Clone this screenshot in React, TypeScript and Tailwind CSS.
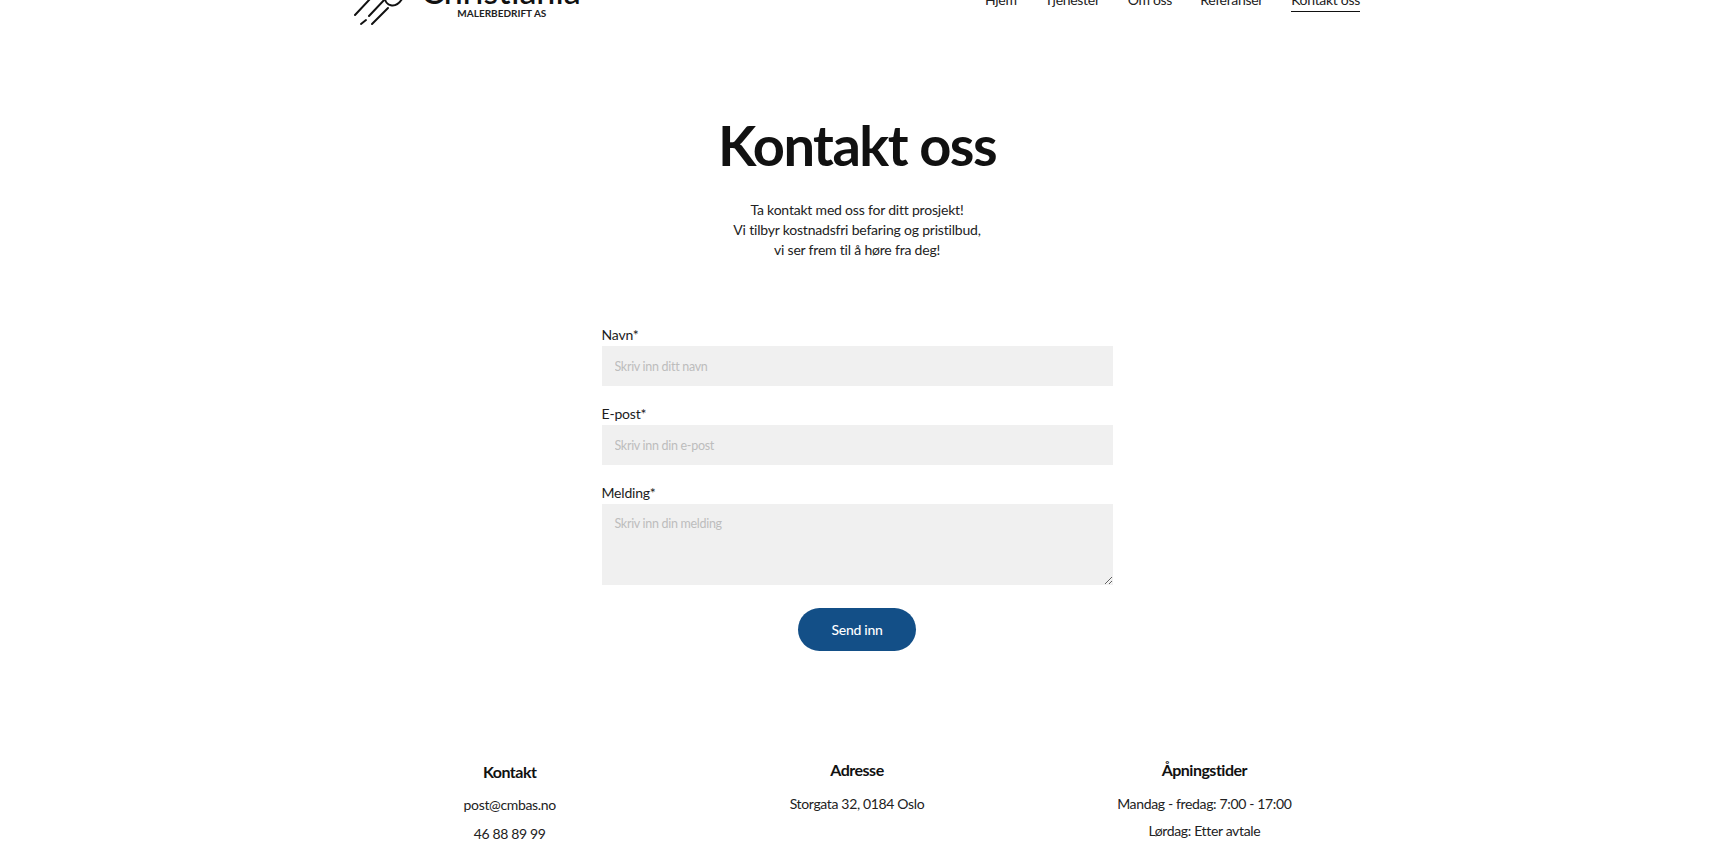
import React from 'react';

const navItems = ['Hjem', 'Tjenester', 'Om oss', 'Referanser', 'Kontakt oss'];

const Field: React.FC<{ label: string; placeholder: string; multiline?: boolean }> = ({ label, placeholder, multiline }) => (
  <div className="flex flex-col">
    <label className="mb-[1px] text-[14px] leading-[20px] tracking-[-0.2px] text-[#1c1c1c]">{label}</label>
    {multiline ? (
      <textarea
        placeholder={placeholder}
        className="h-[81px] bg-[#f0f0f0] px-[13px] py-[11px] text-[12.5px] leading-[18px] tracking-[-0.3px] outline-none placeholder:text-[#bdbdbd]"
      />
    ) : (
      <input
        placeholder={placeholder}
        className="h-[40px] bg-[#f0f0f0] px-[13px] text-[12.5px] tracking-[-0.3px] outline-none placeholder:text-[#bdbdbd]"
      />
    )}
  </div>
);

const FooterColumn: React.FC<{ title: string; lines: string[]; className?: string; listClass: string }> = ({ title, lines, className, listClass }) => (
  <div className={`flex flex-col items-center ${className ?? ''}`}>
    <h3 className="text-[16px] leading-[24px] font-bold tracking-[-0.5px] text-[#111]">{title}</h3>
    <div className={`flex flex-col text-[14px] leading-[22px] tracking-[-0.35px] text-[#222] ${listClass}`}>
      {lines.map((line) => (
        <p key={line} className="text-center">{line}</p>
      ))}
    </div>
  </div>
);

export default function App() {
  return (
    <div className="h-[851px] overflow-hidden bg-white pl-[5px] font-['Lato','Liberation_Sans',sans-serif]">
      <header className="mx-auto -mt-[30px] flex h-[56px] w-[1006px] items-start justify-between">
        <div className="flex items-start">
          <svg className="-ml-[4px]" width="56" height="60" viewBox="0 -30 56 60" fill="none" stroke="#111" strokeWidth="2" strokeLinecap="round">
            <path d="M5 15 L20 -1" />
            <path d="M19 16 L36 -2" />
            <path d="M11 24 L16 20" />
            <path d="M22 24 L38 8" />
            <path d="M35 -2 C35 5 45 10 52 -1" />
          </svg>
          <div className="ml-[15px] flex flex-col items-center">
            <span className="text-[34px] leading-[42px] font-medium text-[#111]">Christiania</span>
            <span className="-mt-[5px] ml-[2px] text-[10px] leading-[12px] font-bold text-[#222]">MALERBEDRIFT AS</span>
          </div>
        </div>
        <nav className="mt-[20px] flex gap-[28px] text-[14px] leading-[20px] tracking-[-0.3px] text-[#222]">
          {navItems.map((item) => (
            <a key={item} className={item === 'Kontakt oss' ? 'h-[22px] border-b-[1.5px] border-[#111]' : ''}>
              {item}
            </a>
          ))}
        </nav>
      </header>

      <main className="flex flex-col items-center">
        <h1 className="mt-[81px] text-[56px] leading-[76px] font-bold tracking-[-1.5px] text-[#111]">Kontakt oss</h1>
        <div className="mt-[17px] text-center text-[14px] leading-[20px] tracking-[-0.2px] text-[#222]">
          <p>Ta kontakt med oss for ditt prosjekt!</p>
          <p>Vi tilbyr kostnadsfri befaring og pristilbud,</p>
          <p>vi ser frem til å høre fra deg!</p>
        </div>
        <form className="mt-[65px] flex w-[511px] flex-col gap-[18px]">
          <Field label="Navn*" placeholder="Skriv inn ditt navn" />
          <Field label="E-post*" placeholder="Skriv inn din e-post" />
          <Field label="Melding*" placeholder="Skriv inn din melding" multiline />
          <button type="button" className="mx-auto mt-[5px] h-[43px] w-[118px] rounded-full bg-[#134f87] text-[14px] font-medium tracking-[-0.3px] text-white">
            Send inn
          </button>
        </form>
      </main>

      <footer className="mx-auto mt-[107px] grid w-[1042px] grid-cols-3">
        <FooterColumn className="mt-[2px]" listClass="mt-[10px] gap-[7px]" title="Kontakt" lines={['post@cmbas.no', '46 88 89 99']} />
        <FooterColumn listClass="mt-[11px] gap-[5px]" title="Adresse" lines={['Storgata 32, 0184 Oslo']} />
        <FooterColumn listClass="mt-[11px] gap-[5px]" title="Åpningstider" lines={['Mandag - fredag: 7:00 - 17:00', 'Lørdag: Etter avtale']} />
      </footer>
    </div>
  );
}
